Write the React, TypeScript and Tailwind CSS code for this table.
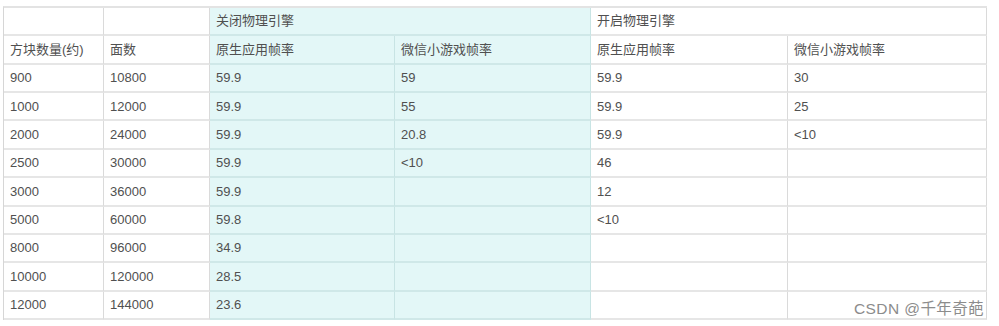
import React from 'react';

type Cell = { text?: string; span?: 2; cyan?: boolean };

const rows: Cell[][] = [
  [{}, {}, { text: '关闭物理引擎', span: 2, cyan: true }, { text: '开启物理引擎', span: 2 }],
  [
    { text: '方块数量(约)' },
    { text: '面数' },
    { text: '原生应用帧率', cyan: true },
    { text: '微信小游戏帧率', cyan: true },
    { text: '原生应用帧率' },
    { text: '微信小游戏帧率' },
  ],
];

const data = [
  ['900', '10800', '59.9', '59', '59.9', '30'],
  ['1000', '12000', '59.9', '55', '59.9', '25'],
  ['2000', '24000', '59.9', '20.8', '59.9', '<10'],
  ['2500', '30000', '59.9', '<10', '46', ''],
  ['3000', '36000', '59.9', '', '12', ''],
  ['5000', '60000', '59.8', '', '<10', ''],
  ['8000', '96000', '34.9', '', '', ''],
  ['10000', '120000', '28.5', '', '', ''],
  ['12000', '144000', '23.6', '', '', ''],
];

data.forEach(r =>
  rows.push(r.map((text, i) => ({ text, cyan: i === 2 || i === 3 })))
);

export default function App() {
  return (
    <div
      className="relative w-[999px] h-[326px] bg-white pt-[6px] pl-[3px]"
      style={{ fontFamily: '"Liberation Sans", "Noto Sans CJK SC", sans-serif' }}
    >
      <div className="grid grid-cols-[100px_106px_185px_196px_197px_199px] w-[984px] border-t-2 border-l border-[#e3e3e3] border-l-[#d6d6d6] text-[13px] text-[#505050]">
        {rows.map((row, ri) =>
          row.map((c, ci) => (
            <div
              key={`${ri}-${ci}`}
              className={`h-[28.36px] flex items-center pl-[6px] border-r border-b-2 ${
                c.span ? 'col-span-2' : ''
              } ${
                c.cyan
                  ? 'bg-[#e3f7f7] border-r-[#c8e4e4] border-b-[#cfe8e8]'
                  : 'bg-white border-r-[#dadada] border-b-[#e6e6e6]'
              }`}
            >
              {c.text}
            </div>
          ))
        )}
      </div>
      <div className="absolute right-[15px] top-[299px] text-[15.5px] tracking-[0.4px] text-[#8c8c8c] leading-[20px]">
        CSDN @千年奇葩
      </div>
    </div>
  );
}
